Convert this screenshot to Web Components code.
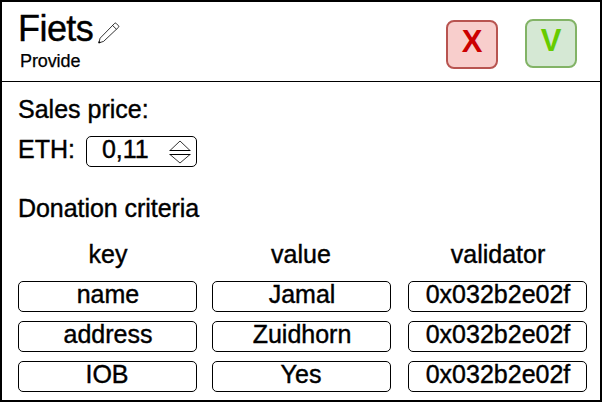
<!DOCTYPE html>
<html lang="en">
<head>
<meta charset="utf-8">
<title>Fiets</title>
<style>
html,body{margin:0;background:#fff;color:#000;font-family:"Liberation Sans",Arial,sans-serif}
</style>
</head>
<body>
<item-editor></item-editor>
<script>
function define(name, html) {
  customElements.define(name, class extends HTMLElement {
    constructor() {
      super();
      this.attachShadow({mode: "open"}).innerHTML = html;
    }
  });
}

define("pencil-icon", `
<style>:host{display:block;width:22px;height:22px}svg{display:block}</style>
<svg width="22" height="22" viewBox="0 0 22 22" fill="none" stroke="#000" stroke-width=".8" stroke-linejoin="round">
<path d="M.8 20.9 2.1 16.2 16.7 1.3Q17.4.7 18.2 1.4L20.5 3.8Q21.2 4.6 20.5 5.3L5.6 19.4ZM14.6 3.5 18.4 7.2"/>
<path d="M.8 20.9 1.2 19.5 2.2 20.5Z" fill="#000"/></svg>`);

define("action-button", `
<style>
:host{box-sizing:border-box;display:block;width:52px;height:49px;border:2px solid #b85450;border-radius:8px;background:#f8cecc;color:#c00;font-weight:bold;font-size:31px;line-height:39px;text-align:center;-webkit-text-stroke:0}
:host([kind=accept]){border-color:#82b366;background:#d5e8d4;color:#6c0}
</style><slot></slot>`);

define("value-box", `
<style>
:host{box-sizing:border-box;display:block;height:31px;border:1px solid #000;border-radius:5px;line-height:25px;text-align:center;white-space:nowrap;text-indent:1px}
:host([short]){text-indent:-1px}
</style><slot></slot>`);

define("number-stepper", `
<style>
:host{box-sizing:border-box;display:flex;width:111px;height:31px;border:1px solid #000;border-radius:5px;padding:0 5px 0 15px;justify-content:space-between;line-height:25px}
svg{display:block;margin-top:3px}
</style><span><slot></slot></span>
<svg width="22" height="24" viewBox="0 0 22 24" fill="none" stroke="#000" stroke-width=".8"><path d="M1 10.5 11 1 21 10.5M1 14.5 11 23 21 14.5"/><path d="M.5 10.5H21.5M.5 14.5H21.5" stroke-width="1"/></svg>`);

define("editor-header", `
<style>
:host{box-sizing:border-box;display:flex;height:80px;border-bottom:1px solid #000;padding-left:16px;padding-right:23px}
.text{flex:1;padding-top:6px}
.title{display:flex;gap:5px;font-size:36px;line-height:42px;height:42px}
.title span{letter-spacing:-.55px}
pencil-icon{margin-top:14px}
.sub{font-size:18px;line-height:22px;padding-left:2px;letter-spacing:-.1px;-webkit-text-stroke:.25px}
.actions{display:flex;gap:27px}
</style>
<div class="text"><div class="title"><span><slot name="title"></slot></span><pencil-icon></pencil-icon></div>
<div class="sub"><slot name="subtitle"></slot></div></div>
<div class="actions"><slot name="actions"></slot></div>`);

define("criteria-table", `
<style>
:host{display:grid;grid-template-columns:179px 179px 179px;column-gap:15px;row-gap:9px}
.head{height:33px;line-height:31px;text-align:center}
.wide{margin-left:2px;width:179px}
.head:not(.mid){text-indent:1px}
.mid{text-indent:-1px}
</style>
<div class="head">key</div><div class="head mid">value</div><div class="head wide">validator</div>
<value-box>name</value-box><value-box>Jamal</value-box><value-box class="wide">0x032b2e02f</value-box>
<value-box>address</value-box><value-box>Zuidhorn</value-box><value-box class="wide">0x032b2e02f</value-box>
<value-box short>IOB</value-box><value-box short>Yes</value-box><value-box class="wide">0x032b2e02f</value-box>`);

define("item-editor", `
<style>
:host{box-sizing:border-box;display:block;width:602px;height:402px;border:2px solid #000;font-size:25px;-webkit-text-stroke:.4px}
.content{padding:12px 0 0 16px}
.label{height:30px;line-height:30px}
.price{display:flex;gap:11px;margin-top:12px;height:31px;line-height:27px}
.criteria{margin-top:26px;letter-spacing:-.05px}
criteria-table{margin-top:16px}
action-button{margin-top:18px}
action-button[kind=accept]{margin-top:17px}
</style>
<editor-header>
<span slot="title">Fiets</span><span slot="subtitle">Provide</span>
<action-button slot="actions">X</action-button><action-button slot="actions" kind="accept">V</action-button>
</editor-header>
<div class="content">
<div class="label">Sales price:</div>
<div class="price"><span>ETH:</span><number-stepper>0,11</number-stepper></div>
<div class="label criteria">Donation criteria</div>
<criteria-table></criteria-table>
</div>`);
</script>
</body>
</html>
